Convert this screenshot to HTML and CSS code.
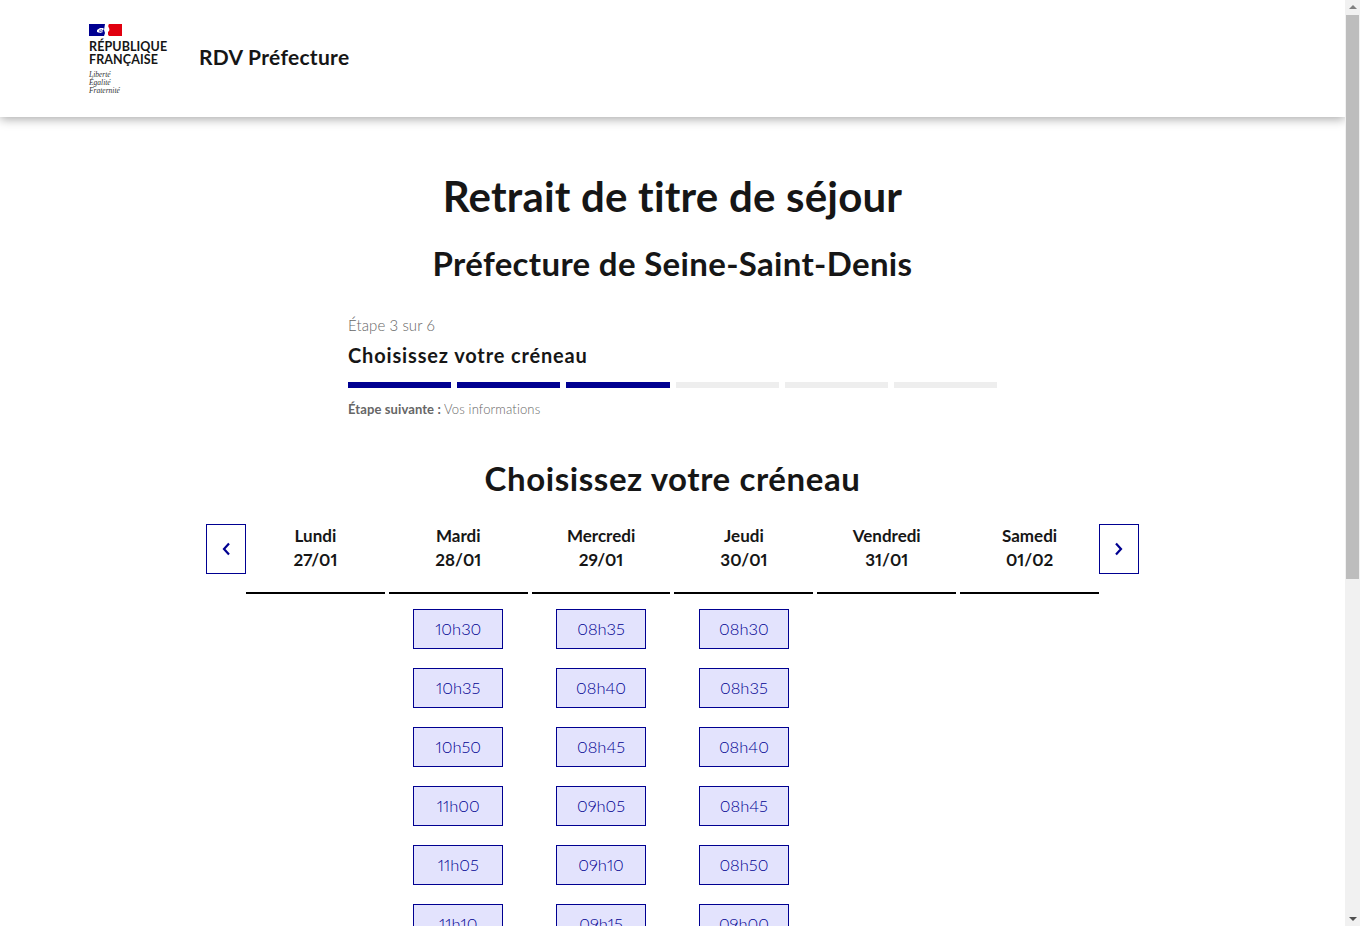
FILE: index.html
```html
<!DOCTYPE html>
<html lang="fr">
<head>
    <meta charset="UTF-8">
    <meta name="viewport" content="width=device-width, initial-scale=1.0">
    <title>RDV Préfecture</title>
    <link rel="stylesheet" href="styles.css">
</head>
<body>
    <div class="page">
        <header class="site-header">
            <div class="logo">
                <svg class="flag" viewBox="0 0 33 12" width="33" height="12" aria-hidden="true">
                    <rect width="33" height="12" fill="#fff"/>
                    <rect width="16" height="12" fill="#000091"/>
                    <rect x="19" width="14" height="12" fill="#e1000f"/>
                    <path d="M16 0h4c-1 1-1 3 0 4 1 2 0 3-1 4-1 1 0 3 1 4h-5l1-3-1-3z" fill="#fff"/>
                    <path d="M8 6l3-2 3 0 1 1-2 2 1 1-3 1-3-1z" fill="#fff"/>
                    <path d="M10 6.500l3-1M10 8l3-1" stroke="#000091" stroke-width="0.600" fill="none"/>
                </svg>
                <div class="logo-name">RÉPUBLIQUE<br>FRANÇAISE</div>
                <div class="logo-motto">Liberté<br>Égalité<br>Fraternité</div>
            </div>
            <div class="service-name">RDV Préfecture</div>
        </header>

        <main class="content">
            <h1>Retrait de titre de séjour</h1>
            <h2 class="subtitle">Préfecture de Seine-Saint-Denis</h2>

            <div class="stepper">
                <div class="step-count">Étape 3 sur 6</div>
                <div class="step-title">Choisissez votre créneau</div>
                <div class="step-bars">
                    <span class="done"></span>
                    <span class="done"></span>
                    <span class="done"></span>
                    <span></span>
                    <span></span>
                    <span></span>
                </div>
                <div class="step-next"><b>Étape suivante :</b> Vos informations</div>
            </div>

            <h2 class="slots-title">Choisissez votre créneau</h2>

            <div class="calendar">
                <button class="nav-btn" aria-label="Précédent">
                    <svg viewBox="0 0 10 14" width="10" height="14"><path d="M8 1.500 L3 7 L8 12.500" fill="none" stroke="#000091" stroke-width="2.200"/></svg>
                </button>

                <div class="days">
                    <div class="day">
                        <div class="day-head">Lundi<br>27/01</div>
                    </div>
                    <div class="day">
                        <div class="day-head">Mardi<br>28/01</div>
                        <a class="slot">10h30</a>
                        <a class="slot">10h35</a>
                        <a class="slot">10h50</a>
                        <a class="slot">11h00</a>
                        <a class="slot">11h05</a>
                        <a class="slot">11h10</a>
                    </div>
                    <div class="day">
                        <div class="day-head">Mercredi<br>29/01</div>
                        <a class="slot">08h35</a>
                        <a class="slot">08h40</a>
                        <a class="slot">08h45</a>
                        <a class="slot">09h05</a>
                        <a class="slot">09h10</a>
                        <a class="slot">09h15</a>
                    </div>
                    <div class="day">
                        <div class="day-head">Jeudi<br>30/01</div>
                        <a class="slot">08h30</a>
                        <a class="slot">08h35</a>
                        <a class="slot">08h40</a>
                        <a class="slot">08h45</a>
                        <a class="slot">08h50</a>
                        <a class="slot">09h00</a>
                    </div>
                    <div class="day">
                        <div class="day-head">Vendredi<br>31/01</div>
                    </div>
                    <div class="day">
                        <div class="day-head">Samedi<br>01/02</div>
                    </div>
                </div>

                <button class="nav-btn" aria-label="Suivant">
                    <svg viewBox="0 0 10 14" width="10" height="14"><path d="M2 1.500 L7 7 L2 12.500" fill="none" stroke="#000091" stroke-width="2.200"/></svg>
                </button>
            </div>
        </main>
    </div>

    <div class="scrollbar">
        <div class="arrow-up"></div>
        <div class="thumb"></div>
        <div class="arrow-down"></div>
    </div>
</body>
</html>
```

FILE: styles.css
```css
html, body {
    height: 100%;
    margin: 0;
    padding: 0;
    overflow: hidden;
}

body {
    display: flex;
    font-family: Lato, "Noto Sans", sans-serif;
    font-variant-numeric: proportional-nums;
    color: #161616;
    background-color: #fff;
}

.page {
    flex: 1;
    min-width: 0;
    height: 926px;
    overflow: hidden;
}

/* header */
.site-header {
    height: 117px;
    box-sizing: border-box;
    padding: 24px 0 0 89px;
    display: flex;
    background: #fff;
    box-shadow: 0 2px 10px rgba(0, 0, 0, 0.35);
}

.logo {
    width: 110px;
}

.flag {
    display: block;
}

.logo-name {
    margin-top: 4px;
    font-size: 12.5px;
    line-height: 13px;
    font-weight: 700;
    letter-spacing: 0.1px;
    white-space: nowrap;
}

.logo-motto {
    margin-top: 5px;
    font-family: "Liberation Serif", serif;
    font-style: italic;
    font-size: 7.5px;
    line-height: 8px;
    color: #333;
}

.service-name {
    margin-top: 20px;
    font-size: 21px;
    line-height: 26px;
    font-weight: 700;
    letter-spacing: 0.3px;
}

/* titles */
.content {
    padding-top: 55px;
}

h1 {
    margin: 0;
    text-align: center;
    font-size: 42px;
    line-height: 48px;
    font-weight: 700;
    letter-spacing: 0.2px;
}

h2 {
    margin: 0;
    text-align: center;
    font-weight: 700;
}

.subtitle {
    margin-top: 23px;
    font-size: 33px;
    line-height: 40px;
    letter-spacing: 0.33px;
}

/* stepper */
.stepper {
    width: 649px;
    margin: 32px 0 0 348px;
}

.step-count {
    font-size: 15px;
    line-height: 20px;
    font-weight: 300;
    letter-spacing: 0.1px;
    color: #666;
}

.step-title {
    margin-top: 7px;
    font-size: 20px;
    line-height: 26px;
    font-weight: 700;
    letter-spacing: 0.85px;
}

.step-bars {
    display: flex;
    gap: 6px;
    margin-top: 14px;
}

.step-bars span {
    flex: 1;
    height: 6px;
    background-color: #eee;
}

.step-bars .done {
    background-color: #000091;
}

.step-next {
    margin-top: 12px;
    font-size: 13px;
    line-height: 18px;
    font-weight: 300;
    letter-spacing: 0.15px;
    color: #666;
}

.step-next b {
    font-weight: 700;
    letter-spacing: 0.1px;
}

.slots-title {
    margin-top: 40px;
    font-size: 33px;
    line-height: 40px;
    letter-spacing: 0.58px;
}

/* calendar */
.calendar {
    display: flex;
    align-items: flex-start;
    width: 933px;
    margin: 26px 0 0 206px;
}

.nav-btn {
    flex: none;
    width: 40px;
    height: 50px;
    padding: 0;
    display: flex;
    align-items: center;
    justify-content: center;
    background: #fff;
    border: 1px solid #000091;
}

.days {
    flex: 1;
    display: grid;
    grid-template-columns: repeat(6, 1fr);
    column-gap: 4px;
}

.day {
    display: flex;
    flex-direction: column;
    align-items: center;
}

.day-head {
    width: 100%;
    height: 68px;
    border-bottom: 2px solid #000;
    text-align: center;
    font-size: 17px;
    line-height: 24px;
    font-weight: 700;
    margin-bottom: 15px;
}

.slot {
    width: 90px;
    height: 40px;
    box-sizing: border-box;
    flex: none;
    margin-bottom: 19px;
    display: flex;
    align-items: center;
    justify-content: center;
    background-color: #e3e3fd;
    border: 1px solid #000091;
    color: #000091;
    font-size: 16.5px;
    font-weight: 300;
}

/* drawn scrollbar, the page itself is clipped */
.scrollbar {
    flex: none;
    width: 15px;
    height: 926px;
    display: flex;
    flex-direction: column;
    align-items: center;
    background-color: #f1f1f1;
}

.thumb {
    width: 13px;
    height: 564px;
    margin-top: 6px;
    background-color: #bdbdbd;
}

.arrow-up, .arrow-down {
    width: 0;
    height: 0;
    border-left: 4px solid transparent;
    border-right: 4px solid transparent;
}

.arrow-up {
    margin-top: 5px;
    border-bottom: 4px solid #808080;
}

.arrow-down {
    margin-top: auto;
    margin-bottom: 5px;
    border-top: 4px solid #505050;
}
```
